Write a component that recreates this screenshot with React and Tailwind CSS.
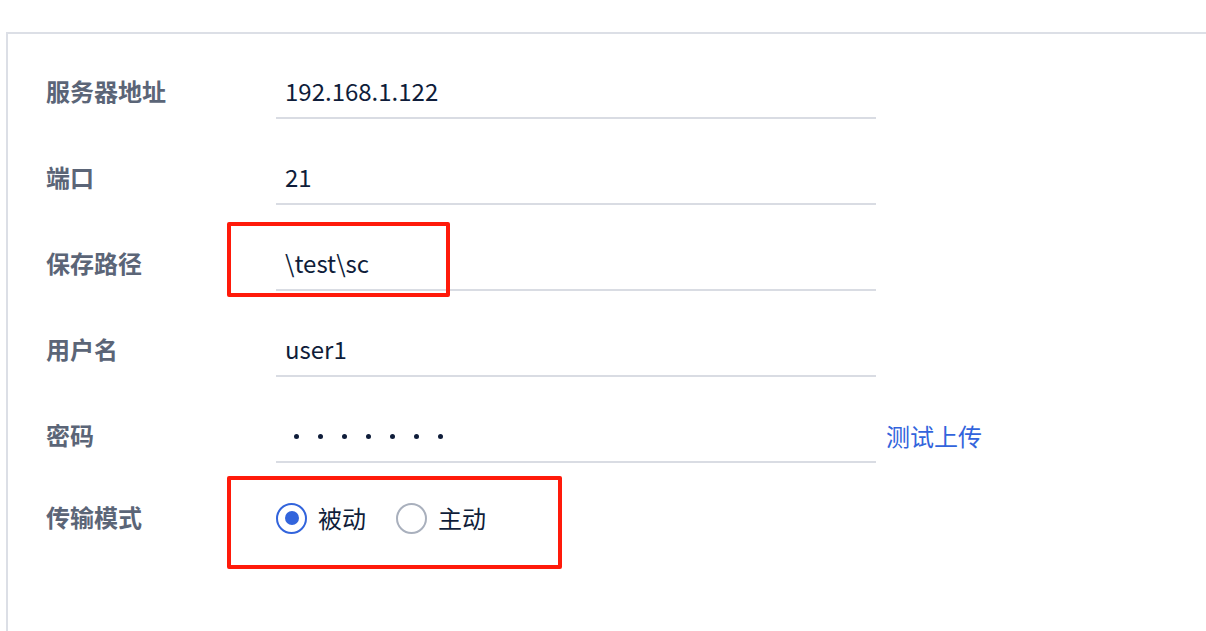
export default function App() {
  const font = { fontFamily: '"Noto Sans CJK SC", "Noto Sans", sans-serif' };
  const rows = [
    { label: "服务器地址", value: "192.168.1.122" },
    { label: "端口", value: "21" },
    { label: "保存路径", value: "\\test\\sc" },
    { label: "用户名", value: "user1" },
  ];
  return (
    <div className="relative w-[1206px] h-[631px] bg-white overflow-hidden font-['Noto_Sans_CJK_SC','Noto_Sans',sans-serif]" style={font}>
      <div className="pt-[32px] h-full">
        <div className="ml-[6px] h-full border-l-2 border-t-2 border-[#dcdfe6] pl-[38px] pt-[35px]">
          <div className="flex flex-col gap-[36px]">
            {rows.map((r) => (
              <div key={r.label} className="flex items-center">
                <div className="w-[230px] mb-[6px] text-[24px] font-bold text-[#5b6577] leading-none">{r.label}</div>
                <div className="w-[600px] h-[50px] border-b-2 border-[#d9dce3] flex items-center pl-[9px] pb-[4px] text-[24px] text-[#0f1d3a] leading-none">
                  {r.value}
                </div>
              </div>
            ))}
            <div className="flex items-center">
              <div className="w-[230px] mb-[6px] text-[24px] font-bold text-[#5b6577] leading-none">密码</div>
              <div className="w-[600px] h-[50px] border-b-2 border-[#d9dce3] flex items-center pl-[18px] pb-[2px] gap-[19px]">
                {[0, 1, 2, 3, 4, 5, 6].map((i) => (
                  <span key={i} className="block w-[5px] h-[5px] rounded-full bg-[#0f1d3a]" />
                ))}
              </div>
              <div className="ml-[10px] mb-[4px] text-[24px] text-[#3264dc] leading-none">测试上传</div>
            </div>
            <div className="flex items-center h-[40px] -mt-[1px]">
              <div className="w-[230px] mb-[2px] text-[24px] font-bold text-[#5b6577] leading-none">传输模式</div>
              <div className="flex items-center">
                <span className="w-[31px] h-[31px] rounded-full border-2 border-[#3264dc] flex items-center justify-center">
                  <span className="block w-[14px] h-[14px] rounded-full bg-[#3264dc]" />
                </span>
                <span className="ml-[11px] text-[24px] text-[#0f1d3a] leading-none">被动</span>
                <span className="ml-[30px] w-[31px] h-[31px] rounded-full border-2 border-[#a9b0bd]" />
                <span className="ml-[11px] text-[24px] text-[#0f1d3a] leading-none">主动</span>
              </div>
            </div>
          </div>
        </div>
      </div>
      <div className="absolute left-[227px] top-[222px] w-[223px] h-[75px] border-[4px] border-[#ff1a0a] rounded-[2px]" />
      <div className="absolute left-[227px] top-[476px] w-[335px] h-[93px] border-[4px] border-[#ff1a0a] rounded-[2px]" />
    </div>
  );
}
